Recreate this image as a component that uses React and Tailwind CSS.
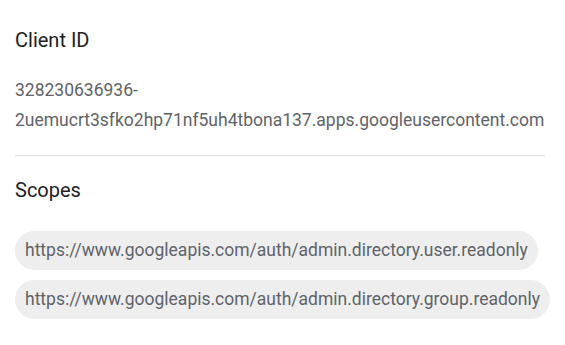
export default function App() {
  return (
    <div className="w-[565px] h-[345px] bg-white pl-[15px] pr-[20px] pt-[25px]" style={{ fontFamily: "Roboto, 'Liberation Sans', sans-serif" }}>
      <div className="text-[20px] leading-[30px] text-[#202124]">Client ID</div>
      <div className="mt-[20px] text-[17.5px] leading-[30px] text-[#5f6368] break-words">
        328230636936-2uemucrt3sfko2hp71nf5uh4tbona137.apps.googleusercontent.com
      </div>
      <div className="mt-[20px] h-px bg-[#e0e0e0]" />
      <div className="mt-[19px] text-[20px] leading-[30px] text-[#202124]">Scopes</div>
      <div className="mt-[26px] flex flex-col items-start gap-[10px]">
        <div className="rounded-full bg-[#eeeeee] px-[10px] h-[39px] flex items-center text-[17.5px] text-[#5f6368] whitespace-nowrap">
          https://www.googleapis.com/auth/admin.directory.user.readonly
        </div>
        <div className="rounded-full bg-[#eeeeee] px-[10px] h-[39px] flex items-center text-[17.5px] text-[#5f6368] whitespace-nowrap">
          https://www.googleapis.com/auth/admin.directory.group.readonly
        </div>
      </div>
    </div>
  );
}
